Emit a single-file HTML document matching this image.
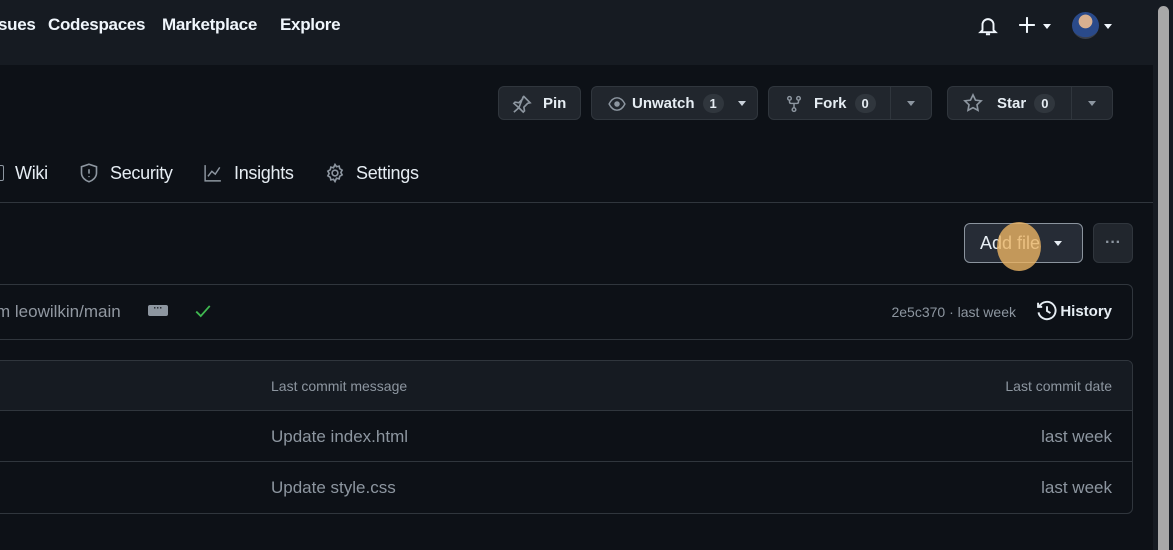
<!DOCTYPE html>
<html><head><meta charset="utf-8"><style>
*{box-sizing:border-box;margin:0;padding:0}
body{width:1173px;height:550px;overflow:hidden;background:#0d1117;font-family:"Liberation Sans",sans-serif;color:#e6edf3;position:relative}
.hdr{position:absolute;left:0;top:0;width:1153px;height:65px;background:#161b22}
.nav{position:absolute;top:15px;font-size:17px;font-weight:bold;color:#f0f6fc;letter-spacing:-0.3px}
.btn{position:absolute;top:86px;height:34px;border:1px solid #30363d;border-radius:6px;background:#21262d;font-size:15px;font-weight:bold;color:#e6edf3;display:flex;align-items:center}
.cnt{display:inline-block;background:#30363d;border-radius:10px;padding:2px 7px;font-size:13px;margin-left:8px}
.sep{position:absolute;top:0;bottom:0;width:1px;background:#30363d}
.tab{position:absolute;top:163px;font-size:18px;color:#e6edf3;letter-spacing:-0.3px}
.car{width:0;height:0;border-left:4px solid transparent;border-right:4px solid transparent;border-top:5px solid #c9d1d9;display:inline-block}
.box{position:absolute;border:1px solid #30363d;border-radius:6px}
.t{position:absolute;font-size:17px;color:#8d96a0}
.r{right:61px;text-align:right}
svg{position:absolute}
</style></head><body>
<div class="hdr"></div>
<div class="nav" style="left:-2px">sues</div>
<div class="nav" style="left:48px">Codespaces</div>
<div class="nav" style="left:162px">Marketplace</div>
<div class="nav" style="left:280px">Explore</div>
<svg style="left:977px;top:15px" width="22" height="22" viewBox="0 0 16 16" fill="none" stroke="#f0f6fc" stroke-width="1.4"><path d="M4 11V7a4 4 0 0 1 8 0v4l1.5 1.5h-11z M6.5 14h3"/></svg>
<svg style="left:1018px;top:16px" width="18" height="18" viewBox="0 0 16 16" stroke="#f0f6fc" stroke-width="1.8"><path d="M8 1v14M1 8h14"/></svg>
<span class="car" style="position:absolute;left:1043px;top:24px;border-top-color:#f0f6fc"></span>
<div style="position:absolute;left:1072px;top:12px;width:27px;height:27px;border-radius:50%;background:radial-gradient(circle at 50% 35%,#d8b090 0 30%,#2a4a8a 32% 70%,#3a3f4a 72%)"></div>
<span class="car" style="position:absolute;left:1104px;top:24px;border-top-color:#f0f6fc"></span>
<div style="position:absolute;left:1153px;top:0;width:20px;height:550px;background:#161b22"></div>
<div style="position:absolute;left:1158px;top:6px;width:11px;height:544px;background:#a8a8a8;border-radius:6px 6px 0 0"></div>

<div class="btn" style="left:498px;width:83px"><svg style="left:13px;top:7px" width="20" height="20" viewBox="0 0 16 16" fill="none" stroke="#8d96a0" stroke-width="1.3"><path d="M9 1.5l5.5 5.5-2 .5-3 3 .5 3-1 1-3.5-3.5L1.5 14.5M5.5 11L1.5 7.5l1-1 3 .5 3-3 .5-2z"/></svg><span style="margin-left:44px">Pin</span></div>
<div class="btn" style="left:591px;width:167px"><svg style="left:15px;top:8px" width="20" height="18" viewBox="0 0 16 16" fill="none" stroke="#8d96a0" stroke-width="1.3"><path d="M1 8c2-4 4.5-5.5 7-5.5S13 4 15 8c-2 4-4.5 5.5-7 5.5S3 12 1 8z"/><circle cx="8" cy="8" r="1.8" fill="#8d96a0"/></svg><span style="margin-left:40px">Unwatch</span><span class="cnt">1</span><span class="car" style="margin-left:14px"></span></div>
<div class="btn" style="left:768px;width:164px"><svg style="left:16px;top:7px" width="18" height="20" viewBox="0 0 16 16" fill="none" stroke="#8d96a0" stroke-width="1.3"><circle cx="4" cy="3" r="1.6"/><circle cx="12" cy="3" r="1.6"/><circle cx="8" cy="13" r="1.6"/><path d="M4 4.6V6q0 1.5 1.5 1.5h5Q12 7.5 12 6V4.6M8 7.5v4"/></svg><span style="margin-left:45px">Fork</span><span class="cnt">0</span><div class="sep" style="left:121px"></div><span class="car" style="position:absolute;left:138px;top:14px;border-top-color:#8d96a0"></span></div>
<div class="btn" style="left:947px;width:166px"><svg style="left:15px;top:6px" width="20" height="20" viewBox="0 0 16 16" fill="none" stroke="#8d96a0" stroke-width="1.3"><path d="M8 1.5l2 4.2 4.5.6-3.3 3.1.8 4.5L8 11.7l-4 2.2.8-4.5L1.5 6.3 6 5.7z"/></svg><span style="margin-left:49px">Star</span><span class="cnt">0</span><div class="sep" style="left:123px"></div><span class="car" style="position:absolute;left:140px;top:14px;border-top-color:#8d96a0"></span></div>

<div style="position:absolute;left:-6px;top:165px;width:10px;height:16px;border:1.5px solid #8d96a0;border-radius:2px"></div>
<div class="tab" style="left:15px">Wiki</div>
<svg style="left:79px;top:163px" width="20" height="20" viewBox="0 0 16 16" fill="none" stroke="#8d96a0" stroke-width="1.3"><path d="M8 1l6 2v5c0 3.5-3 6-6 7-3-1-6-3.5-6-7V3z M8 5v3.5M8 10.5v.8"/></svg>
<div class="tab" style="left:110px">Security</div>
<svg style="left:203px;top:164px" width="20" height="18" viewBox="0 0 16 16" fill="none" stroke="#8d96a0" stroke-width="1.3"><path d="M1 1v14h14M3.5 11l3.5-4.5 3 2.5 4-6"/></svg>
<div class="tab" style="left:234px">Insights</div>
<svg style="left:325px;top:163px" width="20" height="20" viewBox="0 0 16 16" fill="none" stroke="#8d96a0" stroke-width="1.3"><circle cx="8" cy="8" r="2.3"/><path d="M8 1.2l1.2 1.8 2.1-.5.5 2.1 1.9 1.1-1 1.9 1 1.9-1.9 1.1-.5 2.1-2.1-.5L8 14.8l-1.2-1.8-2.1.5-.5-2.1-1.9-1.1 1-1.9-1-1.9 1.9-1.1.5-2.1 2.1.5z"/></svg>
<div class="tab" style="left:356px">Settings</div>
<div style="position:absolute;left:0;top:202px;width:1153px;height:1px;background:#30363d"></div>

<div class="btn" style="left:964px;top:223px;width:119px;height:40px;border-color:#8b949e;background:#262c36;font-weight:normal;font-size:18px"><span style="margin-left:15px">Add file</span><span class="car" style="margin-left:14px;border-top-color:#e6edf3"></span></div>
<div style="position:absolute;left:997px;top:222px;width:44px;height:49px;border-radius:50%;background:rgba(235,180,100,0.8)"></div>
<div class="btn" style="left:1093px;top:223px;width:40px;height:40px;justify-content:center;color:#8d96a0;font-size:16px">···</div>

<div class="box" style="left:-10px;top:284px;width:1143px;height:56px"></div>
<div class="t" style="left:-4px;top:302px;color:#9198a1">m leowilkin/main</div>
<div style="position:absolute;left:148px;top:305px;width:20px;height:11px;background:#8d96a0;border-radius:2px;color:#0d1117;font-size:9px;line-height:6px;text-align:center;font-weight:bold">···</div>
<svg style="left:193px;top:302px" width="20" height="18" viewBox="0 0 16 16" fill="none" stroke="#3fb950" stroke-width="1.6"><path d="M2 8.5l4 4 8-9"/></svg>
<div class="t" style="right:157px;top:304px;font-size:14px">2e5c370 · last week</div>
<svg style="left:1036px;top:300px" width="22" height="22" viewBox="0 0 16 16" fill="none" stroke="#e6edf3" stroke-width="1.4"><path d="M2.5 4.5A6.3 6.3 0 1 1 1.8 9M1.5 2v3h3M8 4.5V8l2.5 1.5"/></svg>
<div class="t r" style="top:303px;font-size:15px;font-weight:bold;color:#e6edf3">History</div>

<div class="box" style="left:-10px;top:360px;width:1143px;height:154px;overflow:hidden">
<div style="height:50px;background:#161b22;border-bottom:1px solid #30363d"></div>
<div style="height:51px;border-bottom:1px solid #30363d"></div>
</div>
<div class="t" style="left:271px;top:378px;font-size:14px">Last commit message</div>
<div class="t r" style="top:378px;font-size:14px">Last commit date</div>
<div class="t" style="left:271px;top:427px">Update index.html</div>
<div class="t r" style="top:427px">last week</div>
<div class="t" style="left:271px;top:478px">Update style.css</div>
<div class="t r" style="top:478px">last week</div>
</body></html>
